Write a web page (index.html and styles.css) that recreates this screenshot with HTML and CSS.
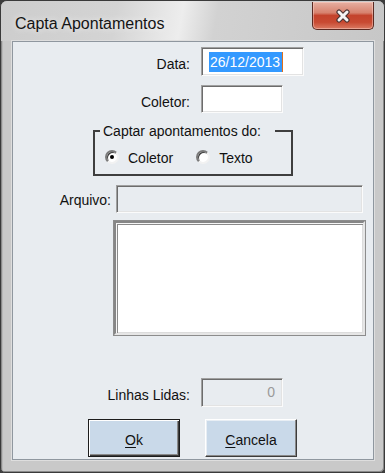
FILE: index.html
```html
<!DOCTYPE html>
<html lang="pt">
<head>
  <meta charset="UTF-8" />
  <title>Capta Apontamentos</title>
  <link rel="stylesheet" href="styles.css">
</head>
<body>
  <div class="window">
    <!-- barra de título -->
    <div class="titlebar">
      <span class="title">Capta Apontamentos</span>
      <button class="close-btn" title="Fechar">
        <svg width="18" height="14" viewBox="0 0 18 14">
          <path d="M5 3 L13 11 M13 3 L5 11" stroke="#4a3434" stroke-width="5.2" stroke-linecap="round" fill="none"/>
          <path d="M5 3 L13 11 M13 3 L5 11" stroke="#f4f4f4" stroke-width="3" stroke-linecap="round" fill="none"/>
        </svg>
      </button>
    </div>

    <!-- área do formulário -->
    <div class="client">
      <div class="row row-data">
        <label class="lbl">Data:</label>
        <div class="edit edit-data"><span class="selected">26/12/2013</span></div>
      </div>

      <div class="row row-coletor">
        <label class="lbl">Coletor:</label>
        <div class="edit edit-coletor"></div>
      </div>

      <fieldset class="group">
        <legend>Captar apontamentos do:</legend>
        <div class="radios">
          <span class="radio checked"></span><span class="radio-text">Coletor</span>
          <span class="radio radio-second"></span><span class="radio-text">Texto</span>
        </div>
      </fieldset>

      <div class="row row-arquivo">
        <label class="lbl lbl-arquivo">Arquivo:</label>
        <div class="edit edit-arquivo"></div>
      </div>

      <div class="memo"></div>

      <div class="row row-linhas">
        <label class="lbl">Linhas Lidas:</label>
        <div class="edit edit-linhas">0</div>
      </div>

      <div class="buttons">
        <button class="btn btn-default"><u>O</u>k</button>
        <button class="btn"><u>C</u>ancela</button>
      </div>
    </div>
  </div>
</body>
</html>
```

FILE: styles.css
```css
/* janela estilo Windows 7 basic */
html, body {
  margin: 0; padding: 0;
}
body {
  background: #3c3c3c;
  font-family: "Liberation Sans", Arial, sans-serif;
  font-size: 14px;
  color: #111;
}
.window {
  width: 385px;
  height: 473px;
  box-sizing: border-box;
  border: 1px solid #3a3a3a;
  border-radius: 7px 7px 5px 5px;
  background: #c9c9c9;
  box-shadow: inset 1px 1px 0 #8a8a8a, inset -1px -1px 0 #8a8a8a, inset 2px 2px 0 #b8b8b8;
  overflow: hidden;
}

/* barra de título */
.titlebar {
  height: 40px;
  display: flex;
  align-items: flex-start;
  background: linear-gradient(100deg, #cdcdcd 0%, #d4d4d4 30%, #e6e6e6 42%, #ededed 47%, #d2d2d2 56%, #c7c7c7 100%);
}
.title {
  font-size: 16px;
  color: #141414;
  padding: 14px 0 0 14px;
  text-shadow: 0 0 6px rgba(255,255,255,0.8);
}
.close-btn {
  margin: 1px 10px 0 auto;
  width: 62px;
  height: 28px;
  padding: 0;
  border: 1px solid #5b2a22;
  border-top: none;
  border-radius: 0 0 5px 5px;
  background: linear-gradient(#e6b0a2 0%, #d7826e 40%, #c4432c 50%, #c84a32 75%, #da7a62 100%);
  box-shadow: inset 0 0 0 1px rgba(255,220,210,0.45);
  display: flex;
  justify-content: center;
  align-items: center;
}

/* área cliente */
.client {
  width: 362px;
  height: 419px;
  box-sizing: border-box;
  margin-left: 11px;
  border: 1px solid #8f979f;
  background: #e8ecf0;
  box-shadow: 0 0 0 1px #dedede;
}
.row {
  display: flex;
  align-items: center;
}
.lbl {
  width: 177px;
  margin-right: 11px;
  text-align: right;
  padding-top: 5px;
}
.row-data { margin-top: 5px; }
.row-coletor { margin-top: 9px; }

.edit {
  box-sizing: border-box;
  height: 29px;
  background: #fff;
  border: 1px solid;
  border-color: #a0a0a0 #fbfbfb #fbfbfb #a0a0a0;
  box-shadow: inset 1px 1px 0 #6c6c6c, inset -1px -1px 0 #e3e3e3;
}
.edit-data {
  width: 103px;
  padding: 4px 0 0 7px;
}
.selected {
  display: inline-block;
  background: #3399ff;
  color: #fff;
  line-height: 20px;
  padding: 0 2px 0 1px;
  border-right: 1px solid #e0701c;
}
.edit-coletor {
  width: 82px;
  height: 28px;
}

/* grupo */
.group {
  margin: 10px 0 0 80px;
  width: 200px;
  box-sizing: border-box;
  border: 2px solid #3e3e3e;
  padding: 0 0 8px 5px;
}
.group legend {
  padding: 0 14px 0 3px;
  line-height: 16px;
}
.radios {
  display: flex;
  align-items: center;
  margin-top: 9px;
}
.radio {
  width: 14px;
  height: 14px;
  box-sizing: border-box;
  border-radius: 50%;
  margin-left: 5px;
  background: #fff;
  border: 2px solid;
  border-color: #7a7a7a #f2f2f2 #f2f2f2 #7a7a7a;
  box-shadow: inset 1px 1px 0 #3c3c3c;
  display: flex;
  justify-content: center;
  align-items: center;
}
.radio.checked::after {
  content: "";
  width: 4px;
  height: 4px;
  border-radius: 50%;
  background: #000;
}
.radio-second { margin-left: 23px; }
.radio-text {
  margin-left: 9px;
  padding-top: 2px;
}

/* arquivo */
.row-arquivo { margin-top: 9px; }
.lbl-arquivo {
  width: 98px;
  margin-right: 5px;
  padding-top: 1px;
}
.edit-arquivo {
  width: 247px;
  height: 28px;
  background: #e8ecf0;
}
.memo {
  margin: 8px 0 0 101px;
  width: 251px;
  height: 114px;
  box-sizing: border-box;
  background: #fff;
  border: 2px solid;
  border-color: #868686 #e6e6e6 #e6e6e6 #868686;
  box-shadow: 0 0 0 1px #8c8c8c, inset 1px 1px 0 #f6f6f6, inset 2px 2px 0 #8a8a8a, inset -1px -1px 0 #dcdcdc;
}

/* linhas lidas */
.row-linhas { margin-top: 43px; }
.edit-linhas {
  width: 82px;
  background: #e8ecf0;
  color: #9a9a9a;
  text-align: right;
  padding: 5px 7px 0 0;
}

/* botões */
.buttons {
  display: flex;
  gap: 25px;
  margin: 12px 0 0 75px;
}
.btn {
  width: 92px;
  height: 38px;
  font-family: "Liberation Sans", Arial, sans-serif;
  font-size: 14px;
  color: #111;
  background: #c9d9e9;
  border: 1px solid;
  border-color: #fff #3c3c3c #3c3c3c #fff;
  box-shadow: inset -1px -1px 0 #8a8a8a, inset 1px 1px 0 #e8eef4;
  padding: 3px 0 0;
}
.btn-default {
  border: 1px solid #1c1c1c;
  box-shadow: inset 1px 1px 0 #fff, inset -1px -1px 0 #3c3c3c, inset -2px -2px 0 #8a8a8a;
}
.btn u {
  text-underline-offset: 2px;
}
```
